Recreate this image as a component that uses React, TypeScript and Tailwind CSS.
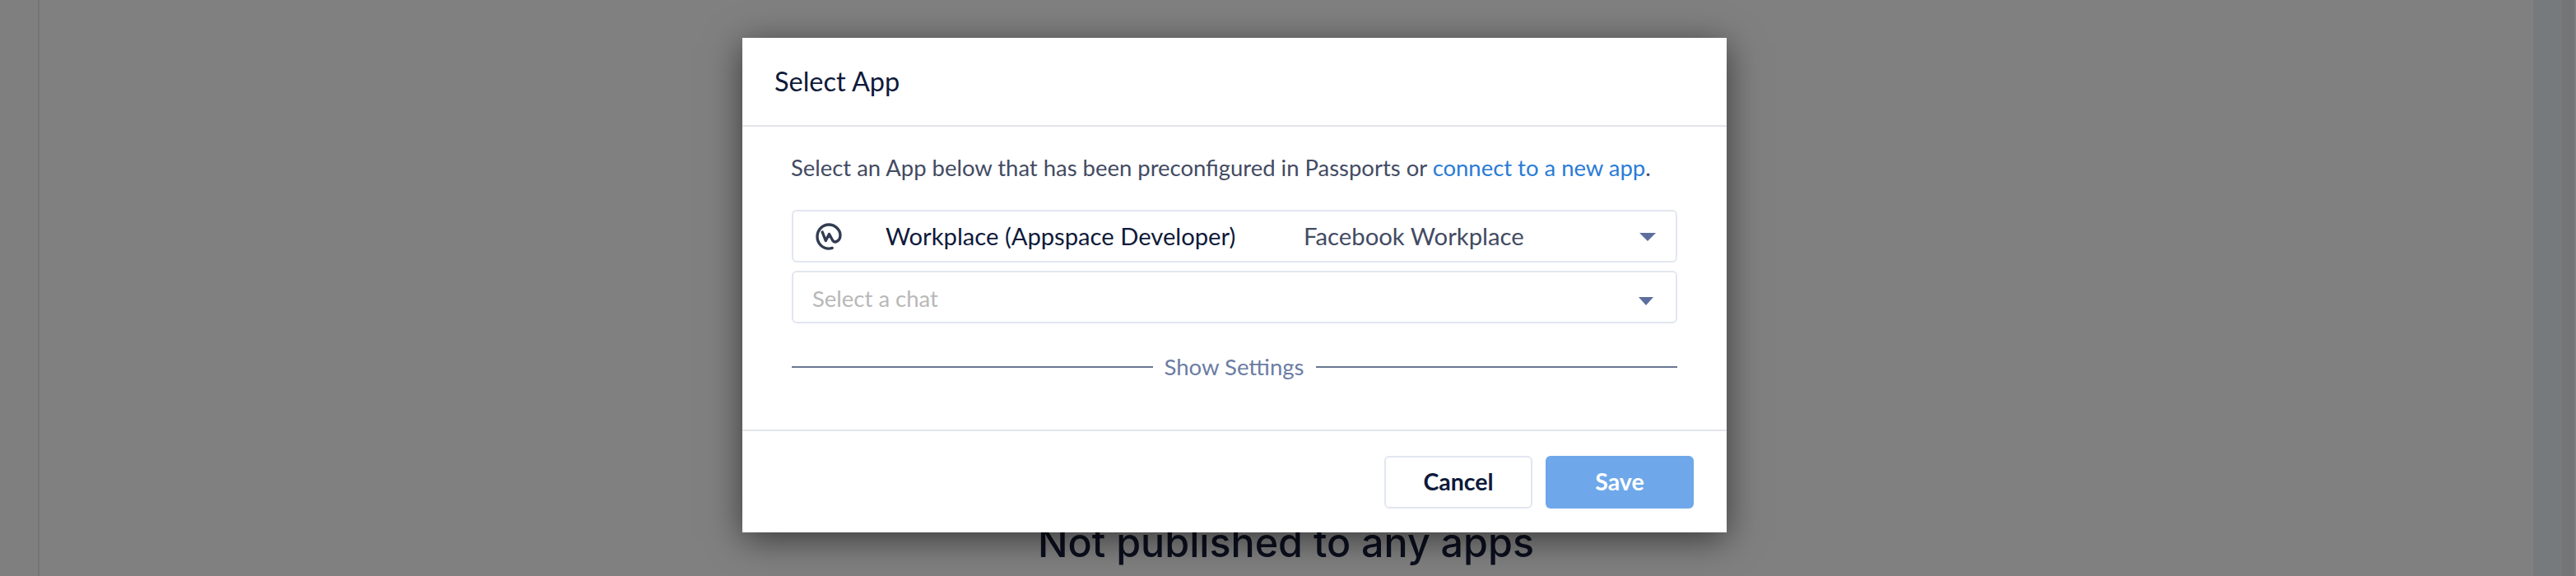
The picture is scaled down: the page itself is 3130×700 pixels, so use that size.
export default function App() {
  const lato = "font-['Lato','Liberation_Sans',sans-serif]";
  return (
    <div className={`relative flex h-[700px] w-[3130px] overflow-hidden bg-[#808080] ${lato}`}>
      <div className="h-full w-[46px] shrink-0 bg-[#7f7f7f]" />
      <div className="flex h-full w-[3032px] shrink-0 flex-col items-center border-l-2 border-[#757575] pt-[630px]">
        <div className="-ml-[1px] font-['Inter',sans-serif] text-[48.4px] leading-[60px] font-medium text-[#0b0f1d]">
          Not published to any apps
        </div>
      </div>
      <div className="h-full w-[35px] shrink-0 bg-[#777a7c]" />
      <div className="h-full w-[15px] shrink-0 bg-[#737576]" />
      <div className="h-full grow bg-[#808080]" />

      <div className="absolute top-[46px] left-[902px] flex h-[601px] w-[1196px] flex-col bg-white shadow-[0_8px_40px_rgba(0,0,0,0.55)]">
        <div className="flex h-[108px] shrink-0 items-center border-b-2 border-[#e3e5e9] pl-[39px] text-[32.5px] text-[#0f1a3a]">
          Select App
        </div>
        <div className="flex grow flex-col px-[60px] pt-[32px]">
          <p className="-ml-[1px] text-[27.45px] leading-[36px] text-[#434b63]">
            Select an App below that has been preconfigured in Passports or{" "}
            <span className="text-[#2a7bd6]">connect to a new app</span>.
          </p>
          <div className="mt-[33px] flex h-[64px] items-center rounded-[6px] border-2 border-[#e2e6ef] pr-[24px] pl-[27px]">
            <svg width="32" height="33" viewBox="0 0 32 33" fill="none" className="shrink-0">
              <path
                d="M20.2 30.4C18.9 30.9 17.5 31.1 16 31.1C8.3 31.1 2 24.6 2 16.5C2 8.5 8.3 2 16 2C23.7 2 30 8.2 30 15C30 19.5 27 23 23.6 23C21.9 23 21.1 22 20.5 20.8L16.5 13.5L12.3 21.5L8.2 11"
                stroke="#343c52"
                strokeWidth="3.4"
                strokeLinecap="round"
                strokeLinejoin="round"
              />
            </svg>
            <span className="ml-[53px] w-[508px] text-[29.2px] text-[#0f1a3a]">Workplace (Appspace Developer)</span>
            <span className="grow text-[29.3px] text-[#434b63]">Facebook Workplace</span>
            <svg width="20" height="10" viewBox="0 0 20 10" className="mt-[2px] shrink-0">
              <path d="M0 0H20L10 10Z" fill="#5b6e9e" />
            </svg>
          </div>
          <div className="mt-[10px] flex h-[64px] items-center justify-between rounded-[6px] border-2 border-[#e2e6ef] pr-[27px] pl-[23px]">
            <span className="mt-[3px] text-[27.5px] text-[#b8b8b8]">Select a chat</span>
            <svg width="18" height="10" viewBox="0 0 18 10" className="mt-[10px] shrink-0">
              <path d="M0 0H18L9 10Z" fill="#5b6e9e" />
            </svg>
          </div>
          <div className="mt-[31px] flex items-center gap-[15px] text-[27.5px] leading-[44px] text-[#6b7da3]">
            <div className="h-[2px] grow bg-[#69778f]" />
            <span className="-ml-[1px]">Show Settings</span>
            <div className="h-[2px] grow bg-[#69778f]" />
          </div>
        </div>
        <div className="flex h-[125px] shrink-0 items-center justify-end gap-[16px] border-t-2 border-[#e3e5e9] pr-[40px]">
          <button className="flex h-[64px] w-[180px] items-center justify-center rounded-[6px] border-2 border-[#e2e6ef] text-[28.5px] font-bold text-[#0f1a3a]">
            Cancel
          </button>
          <button className="flex h-[64px] w-[180px] items-center justify-center rounded-[6px] bg-[#6ea8ea] text-[28.5px] font-bold text-white">
            Save
          </button>
        </div>
      </div>
    </div>
  );
}
